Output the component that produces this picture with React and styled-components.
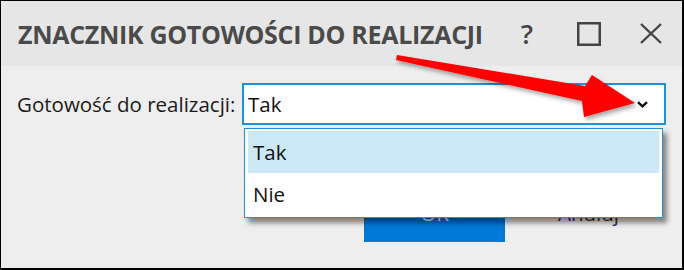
import styled, { createGlobalStyle } from "styled-components";

const GlobalStyle = createGlobalStyle`
  html, body {
    margin: 0;
    padding: 0;
    background: #eeeeee;
    overflow: hidden;
  }
  * {
    box-sizing: border-box;
  }
`;

const Window = styled.div`
  position: relative;
  width: 684px;
  height: 270px;
  display: flex;
  flex-direction: column;
  border: 1px solid #000;
  border-right-width: 2px;
  border-bottom-width: 2px;
  background: #eeeeee;
  font-family: "Open Sans", "Liberation Sans", sans-serif;
  overflow: hidden;
`;

const TitleBar = styled.div`
  height: 65px;
  flex-shrink: 0;
  display: flex;
  align-items: center;
  padding-left: 17px;
  background: #e6e6e6;
`;

const Title = styled.h1`
  margin: 0;
  font-size: 25px;
  font-weight: 700;
  color: #4a4a4a;
  letter-spacing: -0.3px;
  white-space: nowrap;
`;

const Controls = styled.div`
  margin-left: auto;
  display: flex;
  align-items: center;
`;

const ControlButton = styled.div`
  width: 62px;
  height: 44px;
  display: flex;
  align-items: center;
  justify-content: center;
  color: #444;
  font-size: 27px;
  font-weight: 600;
  line-height: 1;
`;

const Body = styled.div`
  flex: 1;
  display: flex;
  flex-direction: column;
  padding: 17px 16px 26px 16px;
`;

const FieldRow = styled.div`
  display: flex;
  align-items: center;
`;

const Label = styled.label`
  width: 225px;
  font-size: 20.5px;
  color: #1a1a1a;
`;

const SelectWrap = styled.div`
  position: relative;
  width: 424px;
  height: 42px;
`;

const SelectBox = styled.div`
  height: 100%;
  display: flex;
  align-items: center;
  justify-content: space-between;
  padding: 0 16px 0 4px;
  background: #fff;
  border: 2px solid #1e90dc;
  font-size: 20.5px;
  color: #111;
`;

const Dropdown = styled.ul`
  position: absolute;
  top: 45px;
  left: 2px;
  right: 3px;
  margin: 0;
  padding: 2px 3px;
  list-style: none;
  background: #fff;
  border: 1px solid #1e90dc;
  box-shadow: 4px 5px 5px rgba(0, 0, 0, 0.45);
  z-index: 2;
`;

const Option = styled.li`
  height: 42px;
  display: flex;
  align-items: center;
  padding-left: 5px;
  font-size: 20.5px;
  color: #111;
  background: ${(props) => (props.$active ? "#cce8f6" : "transparent")};
`;

const ButtonRow = styled.div`
  margin-top: auto;
  display: flex;
  justify-content: flex-end;
  gap: 13px;
  padding-right: 7px;
`;

const Button = styled.button`
  width: 141px;
  height: 44px;
  display: flex;
  justify-content: center;
  align-items: flex-start;
  padding-top: 4px;
  font-family: inherit;
  font-size: 20.5px;
  line-height: 1;
  border: 1px solid ${(props) => (props.$primary ? "#0078d7" : "transparent")};
  background: ${(props) => (props.$primary ? "#0078d7" : "transparent")};
  color: ${(props) => (props.$primary ? "#fff" : "#1b2f55")};
`;

const ArrowLayer = styled.svg`
  position: absolute;
  top: 0;
  left: 0;
  width: 684px;
  height: 270px;
  pointer-events: none;
  z-index: 3;
`;

const Chevron = () => (
  <svg width="11" height="7" viewBox="0 0 11 7">
    <polyline points="1,1.2 5.5,5.4 10,1.2" fill="none" stroke="#111" strokeWidth="2.3" />
  </svg>
);

const App = () => {
  return (
    <>
      <GlobalStyle />
      <Window>
        <TitleBar>
          <Title>ZNACZNIK GOTOWOŚCI DO REALIZACJI</Title>
          <Controls>
            <ControlButton>?</ControlButton>
            <ControlButton>
              <svg width="24" height="24" viewBox="0 0 24 24">
                <rect x="1.25" y="1.25" width="21.5" height="21.5" fill="none" stroke="#444" strokeWidth="2.5" />
              </svg>
            </ControlButton>
            <ControlButton>
              <svg width="22" height="21" viewBox="0 0 22 21">
                <path d="M1 1 L21 20 M21 1 L1 20" stroke="#444" strokeWidth="2.4" fill="none" />
              </svg>
            </ControlButton>
          </Controls>
        </TitleBar>
        <Body>
          <FieldRow>
            <Label>Gotowość do realizacji:</Label>
            <SelectWrap>
              <SelectBox>
                <span>Tak</span>
                <Chevron />
              </SelectBox>
              <Dropdown>
                <Option $active>Tak</Option>
                <Option>Nie</Option>
              </Dropdown>
            </SelectWrap>
          </FieldRow>
          <ButtonRow>
            <Button $primary>OK</Button>
            <Button>Anuluj</Button>
          </ButtonRow>
        </Body>
        <ArrowLayer viewBox="0 0 684 270">
          <defs>
            <filter id="arrowShadow" x="-10%" y="-30%" width="130%" height="180%">
              <feDropShadow dx="2" dy="3" stdDeviation="2" floodColor="#000" floodOpacity="0.35" />
            </filter>
          </defs>
          <polygon
            points="396,54 584,85 591,74 634,102 583,116 581,100 395,59"
            fill="#ff0000"
            filter="url(#arrowShadow)"
          />
        </ArrowLayer>
      </Window>
    </>
  );
};

export default App;
